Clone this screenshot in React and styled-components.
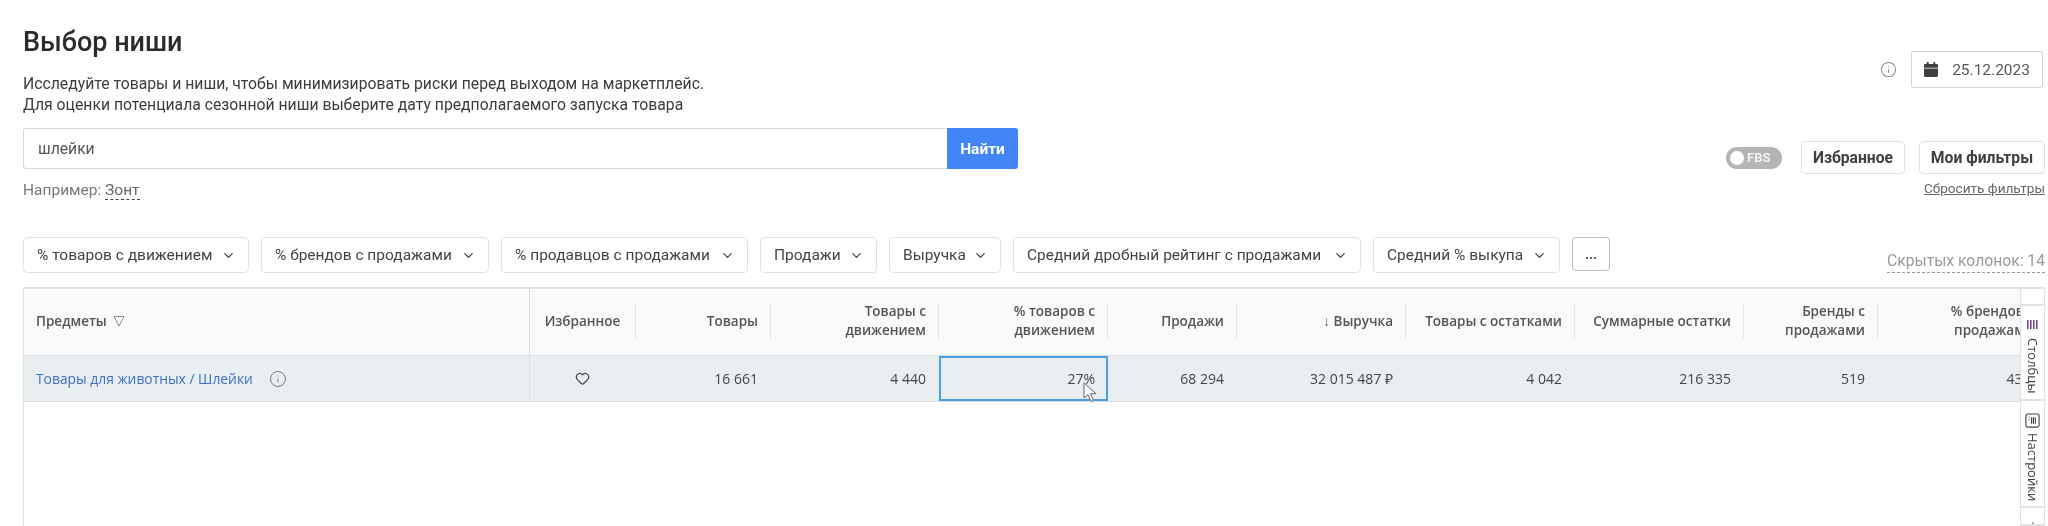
import styled, { createGlobalStyle } from "styled-components";
import { ChevronDown, Heart, Info } from "lucide-react";

const GlobalStyle = createGlobalStyle`
    html, body {
        margin: 0;
        padding: 0;
        background: #fff;
    }
    body {
        font-family: "Roboto", "Liberation Sans", sans-serif;
        color: #3c3c3c;
    }
`;

const Page = styled.div`
    width: 2048px;
    height: 526px;
    box-sizing: border-box;
    padding: 0 3px 0 23px;
    overflow: hidden;
    display: flex;
    flex-direction: column;
    filter: blur(0.35px);
`;

const Top = styled.div`
    display: flex;
    justify-content: space-between;
    height: 237px;
    flex: none;
`;

const Intro = styled.div`
    width: 995px;
    padding-top: 25px;
`;

const Title = styled.h1`
    margin: 0;
    font-size: 27px;
    line-height: 34px;
    font-weight: 500;
    color: #2b2b2b;
`;

const Description = styled.p`
    margin: 14px 0 0;
    font-size: 15.75px;
    line-height: 21px;
    color: #3c3c3c;
`;

const Search = styled.div`
    display: flex;
    height: 41px;
    margin-top: 13px;
`;

const SearchInput = styled.div`
    flex: 1;
    box-sizing: border-box;
    border: 1px solid #d9d9d9;
    border-right: none;
    border-radius: 3px 0 0 3px;
    padding: 0 14px;
    font-size: 15.7px;
    line-height: 39px;
    color: #555;
`;

const SearchButton = styled.button`
    width: 71px;
    border: none;
    border-radius: 0 3px 3px 0;
    background: #4286f5;
    color: #fff;
    font-family: inherit;
    font-size: 15.5px;
    font-weight: 700;
    padding: 0;
`;

const Hint = styled.div`
    margin-top: 12px;
    font-size: 15.5px;
    line-height: 18px;
    color: #777;
`;

const HintLink = styled.span`
    color: #666;
    border-bottom: 1px dashed #444;
`;

const Side = styled.div`
    display: flex;
    flex-direction: column;
    align-items: flex-end;
    padding-top: 51px;
`;

const DateRow = styled.div`
    display: flex;
    align-items: center;
    gap: 14px;
    margin-right: 2px;
`;

const DateBox = styled.div`
    width: 132px;
    height: 37px;
    box-sizing: border-box;
    border: 1px solid #d4d4d4;
    border-radius: 2px;
    padding: 0 12px;
    display: flex;
    align-items: center;
    justify-content: space-between;
    font-size: 15.5px;
    color: #555;
`;

const Controls = styled.div`
    display: flex;
    align-items: center;
    margin-top: 53px;
`;

const Toggle = styled.div`
    width: 56px;
    height: 22px;
    box-sizing: border-box;
    border-radius: 11px;
    background: #b5b5b5;
    padding: 0 4px;
    margin-right: 19px;
    display: flex;
    align-items: center;
    gap: 3px;
    color: #f2f2f2;
    font-size: 13px;
    font-weight: 700;
`;

const ToggleKnob = styled.span`
    width: 14px;
    height: 14px;
    border-radius: 50%;
    background: #fff;
`;

const ControlButton = styled.button`
    width: ${(p) => p.$width}px;
    height: 33px;
    margin-left: ${(p) => p.$gap || 0}px;
    box-sizing: border-box;
    background: #fff;
    border: 1px solid #e2e2e2;
    border-radius: 4px;
    font-family: inherit;
    font-size: 15.7px;
    font-weight: 700;
    color: #3f3f3f;
    padding: 0;
`;

const ResetLink = styled.a`
    margin-top: 5px;
    font-size: 13.6px;
    line-height: 18px;
    color: #666;
    text-decoration: underline;
`;

const Filters = styled.div`
    display: flex;
    align-items: flex-start;
    gap: 12px;
    height: 36px;
    flex: none;
`;

const FilterChip = styled.div`
    width: ${(p) => p.$width}px;
    height: 36px;
    box-sizing: border-box;
    border: 1px solid #e3e3e3;
    border-radius: 4px;
    padding: 0 12px 0 13px;
    display: flex;
    align-items: center;
    justify-content: space-between;
    font-size: 15.5px;
    color: #444;
    white-space: nowrap;
`;

const MoreButton = styled.div`
    width: 38px;
    height: 34px;
    box-sizing: border-box;
    border: 1px solid #bdbdbd;
    border-radius: 4px;
    font-size: 14px;
    font-weight: 700;
    line-height: 32px;
    text-align: center;
    color: #555;
`;

const HiddenColumns = styled.div`
    margin-left: auto;
    margin-top: 14px;
    padding-bottom: 1px;
    font-size: 15.7px;
    line-height: 20px;
    color: #9a9a9a;
    border-bottom: 1px dashed #9a9a9a;
    white-space: nowrap;
`;

const TableBox = styled.div`
    margin-top: 14px;
    flex: 1;
    display: flex;
    min-height: 0;
    border-top: 2px solid #e2e2e2;
    border-left: 1px solid #e2e2e2;
    box-sizing: border-box;
    font-family: "Open Sans", "Liberation Sans", sans-serif;
`;

const Grid = styled.div`
    flex: 1;
    min-width: 0;
    overflow: hidden;
`;

const Row = styled.div`
    display: flex;
    width: max-content;
    height: ${(p) => p.$height}px;
    box-sizing: border-box;
    border-bottom: 1px solid #dcdfe0;
    background: ${(p) => p.$bg};
`;

const HeaderCell = styled.div`
    position: relative;
    width: ${(p) => p.$width}px;
    flex: none;
    box-sizing: border-box;
    padding: 0 13px 2px 12px;
    display: flex;
    align-items: center;
    justify-content: ${(p) => (p.$align === "left" ? "flex-start" : p.$align === "center" ? "center" : "flex-end")};
    text-align: ${(p) => p.$align || "right"};
    font-size: 13.5px;
    line-height: 19px;
    font-weight: 600;
    color: #555;
    border-right: ${(p) => (p.$pinned ? "1px solid #dcdfe0" : "none")};

    &::after {
        content: "";
        display: ${(p) => (p.$pinned ? "none" : "block")};
        position: absolute;
        right: 0;
        top: 15px;
        bottom: 16px;
        width: 1px;
        background: #e2e5e6;
    }
`;

const HeaderLabel = styled.span`
    max-width: 125px;
`;

const BodyCell = styled.div`
    position: relative;
    width: ${(p) => p.$width}px;
    flex: none;
    box-sizing: border-box;
    padding: 0 13px 0 12px;
    display: flex;
    align-items: center;
    gap: 16px;
    justify-content: ${(p) => (p.$align === "left" ? "flex-start" : p.$align === "center" ? "center" : "flex-end")};
    font-size: 14px;
    color: #444;
    white-space: nowrap;
    border-right: ${(p) => (p.$pinned ? "1px solid #dcdfe0" : "none")};
    ${(p) => p.$selected && "border: 2px solid #4a9fdc; padding-right: 11px;"}
`;

const SubjectLink = styled.a`
    font-size: 13.85px;
    color: #3d6fc4;
`;

const Cursor = styled.svg`
    position: absolute;
    left: 142px;
    top: 24px;
`;

const ToolPanel = styled.div`
    width: 23px;
    flex: none;
    display: flex;
    flex-direction: column;
    border-left: 1px solid #e2e2e2;
    border-right: 1px solid #e2e2e2;
    background: #fff;
`;

const ToolTab = styled.div`
    height: ${(p) => p.$height}px;
    flex: none;
    box-sizing: border-box;
    border-bottom: 2px solid #e2e2e2;
    display: flex;
    flex-direction: column;
    align-items: center;
    padding-top: ${(p) => p.$top || 12}px;
    gap: ${(p) => p.$gap || 5}px;
    overflow: hidden;
`;

const ToolLabel = styled.span`
    writing-mode: vertical-rl;
    font-size: 13px;
    line-height: 16px;
    color: #444;
    white-space: nowrap;
`;

const columns = [
    { title: "Избранное", width: 106, value: "", align: "center" },
    { title: "Товары", width: 135, value: "16 661" },
    { title: "Товары с движением", width: 168, value: "4 440" },
    { title: "% товаров с движением", width: 169, value: "27%", selected: true },
    { title: "Продажи", width: 129, value: "68 294" },
    { title: "↓ Выручка", width: 169, value: "32 015 487 ₽" },
    { title: "Товары с остатками", width: 169, value: "4 042", wide: true },
    { title: "Суммарные остатки", width: 169, value: "216 335", wide: true },
    { title: "Бренды с продажами", width: 134, value: "519" },
    { title: "% брендов с продажами", width: 169, value: "43%" },
];

const filters = [
    ["% товаров с движением", 226],
    ["% брендов с продажами", 228],
    ["% продавцов с продажами", 247],
    ["Продажи", 117],
    ["Выручка", 112],
    ["Средний дробный рейтинг с продажами", 348],
    ["Средний % выкупа", 187],
];

function CalendarIcon() {
    return (
        <svg width="14" height="15" viewBox="0 0 15 16" fill="#3f3f3f">
            <path d="M3 0h2v2h5V0h2v2h1.5A1.5 1.5 0 0 1 15 3.5V6H0V3.5A1.5 1.5 0 0 1 1.5 2H3z" />
            <path d="M0 7h15v7.5a1.5 1.5 0 0 1-1.5 1.5h-12A1.5 1.5 0 0 1 0 14.5z" />
        </svg>
    );
}

function FilterIcon() {
    return (
        <svg width="12" height="12" viewBox="0 0 12 12" fill="none" stroke="#888" strokeWidth="1" style={{ marginLeft: 6 }}>
            <path d="M1 1.5h10L6 11z" />
        </svg>
    );
}

function ColumnsIcon() {
    return (
        <svg width="13" height="11" viewBox="0 0 13 11" fill="#7a4a86">
            <rect x="1" y="1" width="1.6" height="9" />
            <rect x="4" y="1" width="1.6" height="9" />
            <rect x="7" y="1" width="1.6" height="9" />
            <rect x="10" y="1" width="1.6" height="9" />
        </svg>
    );
}

function SettingsIcon() {
    return (
        <svg width="15" height="15" viewBox="0 0 16 16" fill="none" stroke="#444">
            <rect x="1" y="1" width="14" height="14" rx="2" strokeWidth="1.2" />
            <path d="M4 4.5h1M4 7h1M7 4.5v7M9 4.5v7M11 4.5v7" strokeWidth="1.2" />
        </svg>
    );
}

function NextTabIcon() {
    return (
        <svg width="8" height="4" viewBox="0 0 8 4" fill="#666">
            <rect x="3" y="0" width="2" height="4" />
        </svg>
    );
}

function App() {
    return (
        <>
            <GlobalStyle />
            <Page>
                <Top>
                    <Intro>
                        <Title>Выбор ниши</Title>
                        <Description>
                            Исследуйте товары и ниши, чтобы минимизировать риски перед выходом на маркетплейс.
                            <br />
                            Для оценки потенциала сезонной ниши выберите дату предполагаемого запуска товара
                        </Description>
                        <Search>
                            <SearchInput>шлейки</SearchInput>
                            <SearchButton>Найти</SearchButton>
                        </Search>
                        <Hint>
                            Например: <HintLink>Зонт</HintLink>
                        </Hint>
                    </Intro>
                    <Side>
                        <DateRow>
                            <Info size={17} color="#8a8a8a" strokeWidth={1.5} />
                            <DateBox>
                                <CalendarIcon />
                                25.12.2023
                            </DateBox>
                        </DateRow>
                        <Controls>
                            <Toggle>
                                <ToggleKnob />
                                FBS
                            </Toggle>
                            <ControlButton $width={104}>Избранное</ControlButton>
                            <ControlButton $width={126} $gap={14}>Мои фильтры</ControlButton>
                        </Controls>
                        <ResetLink>Сбросить фильтры</ResetLink>
                    </Side>
                </Top>

                <Filters>
                    {filters.map(([label, width]) => (
                        <FilterChip key={label} $width={width}>
                            {label}
                            <ChevronDown size={15} color="#444" />
                        </FilterChip>
                    ))}
                    <MoreButton>...</MoreButton>
                    <HiddenColumns>Скрытых колонок: 14</HiddenColumns>
                </Filters>

                <TableBox>
                    <Grid>
                        <Row $height={67} $bg="#f9fafb">
                            <HeaderCell $width={506} $align="left" $pinned>
                                Предметы
                                <FilterIcon />
                            </HeaderCell>
                            {columns.map((c) => (
                                <HeaderCell key={c.title} $width={c.width} $align={c.align}>
                                    {c.wide ? c.title : <HeaderLabel>{c.title}</HeaderLabel>}
                                </HeaderCell>
                            ))}
                        </Row>
                        <Row $height={46} $bg="#e9eef0">
                            <BodyCell $width={506} $align="left" $pinned>
                                <SubjectLink>Товары для животных / Шлейки</SubjectLink>
                                <Info size={18} color="#777" strokeWidth={1.3} />
                            </BodyCell>
                            {columns.map((c) => (
                                <BodyCell key={c.title} $width={c.width} $align={c.align} $selected={c.selected}>
                                    {c.align === "center" ? <Heart size={15} color="#444" strokeWidth={2} /> : c.value}
                                    {c.selected && (
                                        <Cursor width="14" height="21" viewBox="0 0 14 21">
                                            <path d="M1 1v15l4-3.5 3 7 2.5-1-3-6.8H13z" fill="#fff" stroke="#666" strokeWidth="1" />
                                        </Cursor>
                                    )}
                                </BodyCell>
                            ))}
                        </Row>
                    </Grid>
                    <ToolPanel>
                        <ToolTab $height={17} />
                        <ToolTab $height={95} $top={13} $gap={8}>
                            <ColumnsIcon />
                            <ToolLabel>Столбцы</ToolLabel>
                        </ToolTab>
                        <ToolTab $height={107}>
                            <SettingsIcon />
                            <ToolLabel>Настройки</ToolLabel>
                        </ToolTab>
                        <ToolTab $height={18} $top={14}>
                            <NextTabIcon />
                        </ToolTab>
                    </ToolPanel>
                </TableBox>
            </Page>
        </>
    );
}

export default App;
